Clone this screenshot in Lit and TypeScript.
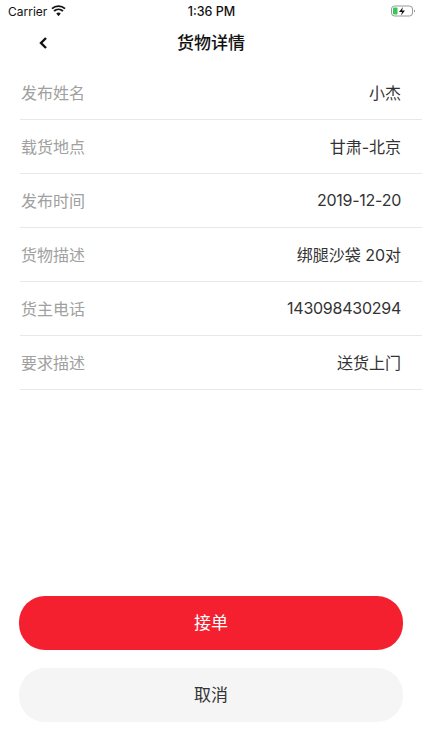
import { LitElement, html, css } from "lit";
import { customElement } from "lit/decorators.js";
import { classMap } from "lit/directives/class-map.js";

const rows: [string, string, boolean][] = [
  ["发布姓名", "小杰", false],
  ["载货地点", "甘肃-北京", false],
  ["发布时间", "2019-12-20", true],
  ["货物描述", "绑腿沙袋 20对", false],
  ["货主电话", "143098430294", true],
  ["要求描述", "送货上门", false],
];

@customElement("app-root")
export class AppRoot extends LitElement {
  static styles = css`
    :host {
      display: flex;
      flex-direction: column;
      width: 422px;
      height: 750px;
      background: #fff;
      font-family: Inter, "Liberation Sans", "Noto Sans CJK SC", sans-serif;
      color: #333;
      overflow: hidden;
    }
    .status {
      height: 22px;
      display: grid;
      grid-template-columns: 1fr auto 1fr;
      align-items: center;
      padding: 0 7px 0 8px;
      font-size: 12.5px;
      color: #111;
    }
    .left { display: flex; align-items: center; gap: 4px; font-size: 12px; }
    .time { font-weight: 500; }
    .right { display: flex; justify-content: flex-end; }
    .nav {
      height: 38px;
      padding-bottom: 6px;
      display: flex;
      align-items: center;
      justify-content: center;
      position: relative;
      font-size: 17px;
      font-weight: 500;
      color: #111;
    }
    .back { position: absolute; left: 38px; top: 14px; width: 10px; height: 14px; }
    .list { padding-left: 20px; }
    .row {
      height: 51px;
      padding: 0 21px 2px 1px;
      border-bottom: 1px solid #e8e8e8;
      display: flex;
      justify-content: space-between;
      align-items: center;
      font-size: 16px;
    }
    .label { color: #a0a0a0; }
    .value { color: #333; }
    .num { letter-spacing: -0.25px; }
    .actions {
      margin-top: auto;
      padding: 0 19px 28px;
      display: flex;
      flex-direction: column;
      gap: 18px;
    }
    .btn {
      box-sizing: border-box;
      height: 54px;
      padding-bottom: 4px;
      border-radius: 26px;
      font-size: 17px;
      display: flex;
      align-items: center;
      justify-content: center;
    }
    .primary { background: #f42030; color: #fff; }
    .secondary { background: #f5f5f5; color: #333; }
  `;

  render() {
    return html`
      <div class="status">
        <div class="left">
          <span>Carrier</span>
          <svg width="15" height="12" viewBox="0 0 16 12">
            <path d="M8 11.500 5.600 8.600a3.600 3.600 0 0 1 4.800 0Z" fill="#111" />
            <path d="M3.900 6.700a6.300 6.300 0 0 1 8.200 0l1.300-1.500a8.300 8.300 0 0 0-10.800 0Z" fill="#111" />
            <path d="M1.700 4.200a9.600 9.600 0 0 1 12.600 0l1.300-1.500A11.600 11.600 0 0 0 .4 2.700Z" fill="#111" />
          </svg>
        </div>
        <div class="time">1:36 PM</div>
        <div class="right">
          <svg width="24" height="12" viewBox="0 0 24 12">
            <rect x="0.500" y="1" width="21" height="10" rx="3" fill="none" stroke="#999" />
            <rect x="2" y="2.500" width="4.500" height="7" rx="1" fill="#35c759" />
            <path d="M12 2 8 7h3l-1 3.500L14 5.500h-3Z" fill="#111" />
            <path d="M23 4.500v3c.6-.2 1-.8 1-1.500s-.4-1.300-1-1.500Z" fill="#999" />
          </svg>
        </div>
      </div>
      <div class="nav">
        <svg class="back" viewBox="0 0 10 14">
          <path d="M8 2 3 7l5 5" fill="none" stroke="#111" stroke-width="2.400" />
        </svg>
        货物详情
      </div>
      <div class="list">
        ${rows.map(
          ([k, v, num]) => html`<div class="row">
            <span class="label">${k}</span>
            <span class=${classMap({ value: true, num })}>${v}</span>
          </div>`
        )}
      </div>
      <div class="actions">
        <div class="btn primary">接单</div>
        <div class="btn secondary">取消</div>
      </div>
    `;
  }
}
